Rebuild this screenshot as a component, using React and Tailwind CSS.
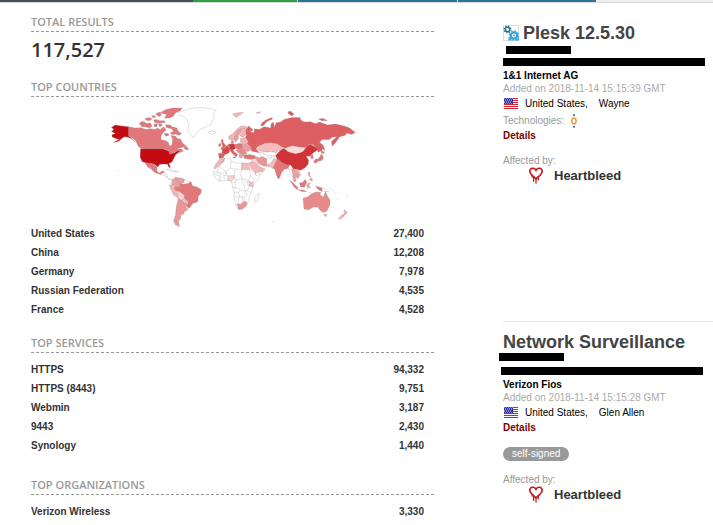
import clsx from 'clsx';

const countries = [
  { name: 'United States', count: '27,400' },
  { name: 'China', count: '12,208' },
  { name: 'Germany', count: '7,978' },
  { name: 'Russian Federation', count: '4,535' },
  { name: 'France', count: '4,528' },
];

const services = [
  { name: 'HTTPS', count: '94,332' },
  { name: 'HTTPS (8443)', count: '9,751' },
  { name: 'Webmin', count: '3,187' },
  { name: '9443', count: '2,430' },
  { name: 'Synology', count: '1,440' },
];

const organizations = [{ name: 'Verizon Wireless', count: '3,330' }];

const hosts = [
  {
    title: 'Plesk 12.5.30',
    icon: true,
    org: '1&1 Internet AG',
    added: 'Added on 2018-11-14 15:15:39 GMT',
    city: 'Wayne',
    technologies: true,
  },
  {
    title: 'Network Surveillance',
    org: 'Verizon Fios',
    added: 'Added on 2018-11-14 15:15:28 GMT',
    city: 'Glen Allen',
    tag: 'self-signed',
  },
];

// Western hemisphere: [fill, points]
const west = [
  ['#c50b12', '34,82 46,75 60,77 86,80 86,108 94,114 104,126 94,116 84,111 74,110 66,114 56,123 40,128 58,117 48,116 36,110 36,104 46,100 34,94 42,88'],
  ['#e27779', '86,80 104,84 122,83 138,88 150,86 164,88 172,84 180,88 190,80 198,90 188,98 182,108 182,118 196,122 204,126 207,136 213,138 216,128 217,116 212,106 226,108 232,116 240,116 246,128 258,138 246,141 234,144 230,148 240,146 250,152 238,158 232,151 222,156 208,162 206,152 198,148 186,145 124,145 114,138 108,124 98,114 86,108'],
  ['#e27779', '180,38 196,29 216,24 246,24 240,32 226,38 220,48 208,54 192,54 200,44'],
  ['#e27779', '196,74 210,75 216,80 230,84 234,94 244,100 236,106 226,102 216,104 210,98 220,94 214,86 198,82'],
  ['#e27779', '122,70 132,66 140,70 150,68 156,78 148,84 134,80 124,80'],
  ['#e27779', '118,68 126,64 134,66 128,72 119,74'],
  ['#e27779', '134,56 146,52 156,56 150,61 140,61'],
  ['#e27779', '160,60 168,58 178,62 192,62 196,67 180,69 164,67'],
  ['#e27779', '166,42 178,36 184,44 176,50'],
  ['#e27779', '154,48 164,46 166,52 158,52'],
  ['#e27779', '162,72 172,70 170,80 162,80'],
  ['#e27779', '176,70 186,72 182,80 176,78'],
  ['#e27779', '192,100 204,100 206,106 196,108'],
  ['#e27779', '250,142 258,138 266,148 256,149'],
  ['#c50b12', '121,146 186,146 196,149 206,153 208,162 222,158 234,151 237,155 226,164 222,172 218,180 214,186 206,190 211,202 206,201 202,192 190,191 178,193 173,200 164,193 154,190 138,188 126,184 120,172'],
  ['#e27779', '134,187 154,190 164,194 170,200 170,212 178,219 184,213 192,212 188,221 180,223 164,217 154,208 144,193 150,206 144,202'],
  ['#fff', '180,223 190,217 196,220 201,228 206,236 218,236 213,240 203,237 196,227'],
  ['#fff', '198,208 208,206 222,212 217,214 204,210'],
  ['#fff', '224,212 236,213 232,217 224,216'],
  ['#ed9ea0', '215,240 226,231 230,242 240,247 238,262 226,256 214,252'],
  ['#ed9ea0', '226,231 240,233 253,237 250,247 240,249 230,242'],
  ['#fff', '252,239 270,246 268,251 256,251 250,246'],
  ['#f3b4b4', '207,254 218,253 226,258 222,266 230,272 233,292 220,284 212,268'],
  ['#fad2d2', '232,277 240,275 252,286 252,296 240,302 234,294'],
  ['#e27779', '226,258 238,262 240,249 250,252 262,250 272,244 276,256 290,260 303,268 302,278 294,288 292,304 278,309 266,324 258,317 264,306 252,294 252,284 240,275 230,272 222,266'],
  ['#f6bcbc', '252,296 262,304 260,310 250,308 244,300'],
  ['#ea9697', '234,294 244,300 252,308 260,311 257,322 264,327 252,333 251,340 242,344 240,356 234,364 238,378 226,374 220,362 226,344 228,318 232,304'],
  ['#fff', '232,38 252,32 270,25 300,22 330,26 348,31 338,40 342,50 336,62 332,74 318,80 304,86 292,94 284,106 280,112 270,104 262,88 266,76 258,56 248,48 236,46'],
  ['#fff', '324,96 332,93 344,94 346,99 334,103 326,100'],
];

// Europe, Asia, Africa and Oceania
const east = [
  ['#fff', '-4,178 10,174 30,174 32,183 48,189 62,188 82,190 90,208 101,222 118,222 114,236 100,250 96,262 94,276 88,286 84,300 78,314 66,326 52,327 46,310 40,292 42,276 36,260 34,246 26,240 12,240 -2,243 -14,236 -22,218 -18,202 -12,188'],
  ['#fff', '108,284 116,278 115,288 109,305 102,304 103,292'],
  ['#f3b4b4', '-2,178 12,175 10,184 -4,196 -16,206 -18,200 -10,188'],
  ['#f6bcbc', '64,189 82,190 88,208 64,208'],
  ['#fad2d2', '22,227 42,226 40,236 32,243 22,240'],
  ['#f6bcbc', '86,244 98,246 96,261 85,256'],
  ['#ea9697', '50,310 60,312 70,303 78,305 79,314 66,326 54,327'],
  ['#dd5f61', '78,86 84,78 98,90 88,95 100,98 102,86 116,88 130,80 150,84 152,70 158,66 162,82 166,68 180,66 190,58 214,52 238,52 240,60 250,66 270,65 284,71 296,66 320,75 344,72 370,78 386,84 403,97 392,103 378,99 372,106 356,110 344,128 334,138 332,124 348,110 334,111 324,119 304,118 296,126 308,136 304,151 292,156 290,148 278,134 266,132 256,142 236,141 216,137 196,144 186,141 168,131 150,128 132,130 112,138 106,146 116,158 94,153 88,138 76,128 74,112 78,106 74,94'],
  ['#dd5f61', '120,77 124,68 136,60 152,53 157,56 138,65 128,77'],
  ['#dd5f61', '202,35 210,34 220,42 214,48 204,42'],
  ['#dd5f61', '293,57 306,55 320,61 304,62'],
  ['#dd5f61', '304,134 310,142 312,152 306,146'],
  ['#f3b4b4', '36,42 50,38 68,37 60,43 48,52 42,48'],
  ['#f3b4b4', '108,37 120,35 118,39 108,40'],
  ['#f6bcbc', '112,139 132,130 150,128 168,131 186,142 184,150 174,151 168,157 150,154 140,156 128,154 114,151 108,145'],
  ['#fff', '128,154 140,156 150,154 166,158 162,166 150,166 140,168 128,160'],
  ['#fff', '118,156 128,160 142,168 150,166 154,172 140,180 126,170 120,168'],
  ['#fff', '136,176 154,172 166,168 158,180 146,194 138,192'],
  ['#d23337', '165,166 178,152 190,144 202,155 224,160 246,155 256,142 268,132 280,138 292,148 278,158 266,168 256,168 264,180 262,192 254,202 240,210 230,208 218,206 210,194 198,194 180,186 170,178'],
  ['#fcd9d9', '192,145 204,140 216,137 236,141 252,143 250,151 238,158 224,161 204,155'],
  ['#e27779', '158,194 166,178 176,178 184,188 198,195 208,193 202,204 190,208 182,218 178,232 172,236 166,220 162,206 156,204'],
  ['#f6bcbc', '142,194 154,186 158,176 170,176 164,188 158,202 144,200'],
  ['#ea9697', '104,168 114,173 128,170 138,176 138,190 142,198 130,198 118,192 110,184'],
  ['#f3b4b4', '84,188 96,184 112,194 122,202 134,206 128,214 104,218 92,204'],
  ['#fff', '104,218 126,213 120,222 106,226'],
  ['#fad2d2', '90,176 104,174 116,192 96,185'],
  ['#e27779', '68,165 86,163 102,166 106,174 90,177 72,175'],
  ['#dd5f61', '-6,159 10,160 14,163 8,173 -4,175'],
  ['#d9484b', '0,145 12,144 20,136 28,146 26,158 14,163 4,158 6,150'],
  ['#d23337', '26,134 34,130 43,133 44,146 36,150 27,147'],
  ['#d9484b', '20,136 28,130 27,140'],
  ['#dd5f61', '2,118 8,119 8,126 16,136 15,141 2,145 7,137 4,130'],
  ['#e27779', '-5,131 2,130 1,138 -5,140'],
  ['#dd5f61', '28,150 38,149 40,154 52,164 46,170 34,158'],
  ['#dd5f61', '36,171 45,170 44,174'],
  ['#f3b4b4', '24,109 36,102 48,88 62,78 78,79 76,86 60,88 50,94 44,108 40,118 27,119'],
  ['#ed9ea0', '50,94 60,88 62,97 54,106 54,114 46,126 40,118 44,108'],
  ['#f3b4b4', '60,88 74,84 77,104 66,111 58,107 64,98'],
  ['#e27779', '32,122 38,121 40,129 33,129'],
  ['#e27779', '43,133 58,129 66,132 66,144 54,148 44,144'],
  ['#f3b4b4', '60,115 76,112 84,126 74,137 66,132 60,126'],
  ['#ed9ea0', '66,137 76,132 90,138 94,148 82,154 72,152 64,146'],
  ['#e68a8a', '54,148 64,146 76,153 78,162 64,164 54,158 46,150'],
  ['#ed9ea0', '56,162 68,164 64,174 56,171'],
  ['#e27779', '268,166 276,163 278,174 272,176'],
  ['#e27779', '278,184 284,177 294,175 302,161 308,172 304,180 292,183 284,190'],
  ['#e27779', '302,152 312,156 306,161 301,158'],
  ['#ed9ea0', '212,207 220,206 228,214 236,222 232,234 224,230 226,242 220,246 216,230'],
  ['#fff', '202,205 212,207 218,228 210,222'],
  ['#f6bcbc', '226,208 234,210 240,224 232,234 234,222'],
  ['#e27779', '208,240 218,248 232,262 230,268 220,260'],
  ['#e27779', '232,268 246,269 258,273 246,274'],
  ['#e27779', '236,249 246,246 254,238 258,246 252,260 240,260'],
  ['#ed9ea0', '260,250 270,248 264,254 270,264 264,260 260,266'],
  ['#ed9ea0', '262,216 268,217 266,226 272,232 264,228'],
  ['#ed9ea0', '266,236 274,234 275,242 268,240'],
  ['#e27779', '284,257 294,260 304,263 304,273 294,269'],
  ['#fff', '304,263 314,267 324,275 314,273 304,273'],
  ['#e68a8a', '247,294 262,289 272,280 286,275 300,276 298,284 308,290 314,273 320,288 328,300 327,314 318,332 308,336 298,330 292,320 278,320 264,328 250,326'],
  ['#e68a8a', '309,342 318,342 314,349'],
  ['#f3b4b4', '370,328 380,336 374,343 366,346 370,338'],
  ['#f3b4b4', '364,342 370,347 358,357 353,354'],
];

const africaBorders = [
  'M12 175L10 184L-4 198L16 214L30 204L32 183M30 204L40 206L64 208V188M-6 198L-8 216L-20 216M-8 216L2 220L16 214M2 220L0 240M10 222L12 240M22 227L18 218M42 226L44 208',
  'M64 208L60 224L66 236L84 240L90 226L88 208M90 226L102 238L98 246M42 226L44 240L60 236L66 236M34 246L46 246L50 238M46 246L44 262L36 260M66 236L64 246L72 256L74 272L60 270L54 262L40 264M40 276L54 276L60 270M84 240L80 250L86 258L80 272L74 272',
  'M54 276L58 290H42M58 290L70 290L72 302M74 272L80 284L70 290M80 272L92 276M-14 224L-4 226L-2 243M-20 222L-12 222M70 246L84 244M66 290V304M54 292V310M16 214L18 226L10 226',
];

function WorldMap() {
  return (
    <svg
      viewBox="6 0 783 381"
      role="img"
      aria-label="World map"
      className="mx-auto mt-[3px] block w-[65%]"
      stroke="#8f8585"
      strokeOpacity="0.6"
      strokeWidth="1.3"
      strokeLinejoin="round"
    >
      {west.map(([fill, points]) => (
        <polygon key={points} fill={fill} points={points} />
      ))}
      <path d="M54 211l3 2M228 214v3M250 370l4 1M240 216l3 1M192 218l-2 5M202 228l-4 2" fill="none" />
      <g transform="translate(360 0)">
        {east.map(([fill, points]) => (
          <polygon key={points} fill={fill} points={points} />
        ))}
        {africaBorders.map((d) => (
          <path key={d} d={d} fill="none" />
        ))}
        <path
          d="M262 277l8 -1M326 264l6 3M334 270l6 3M342 276l4 3M350 296l5 4M376 290l5 -1M154 363l4 1M180 237l3 4M252 212l3 -1M262 204l2 3M278 262l3 2M380 76l6 1"
          fill="none"
        />
      </g>
    </svg>
  );
}

function PleskIcon() {
  return (
    <svg viewBox="0 0 16 16" className="h-4 w-4 shrink-0" aria-hidden="true">
      <rect x="0.5" y="0.5" width="15" height="15" fill="#fff" stroke="#d5dde0" />
      <circle cx="4.5" cy="4.5" r="2.2" fill="none" stroke="#28728f" strokeWidth="1.5" />
      <circle cx="4.5" cy="4.5" r="3.4" fill="none" stroke="#28728f" strokeWidth="1.2" strokeDasharray="1.4 1.27" />
      <circle cx="11" cy="10.5" r="3.2" fill="none" stroke="#35a5d8" strokeWidth="2.2" />
      <circle cx="11" cy="10.5" r="4.6" fill="none" stroke="#35a5d8" strokeWidth="1.3" strokeDasharray="1.8 1.8" />
      <path d="M5.5 12.5h3v3h-3zM12 15.5h4v-3z" fill="#35a5d8" />
      <circle cx="11" cy="10.5" r="1" fill="#35a5d8" />
    </svg>
  );
}

function UsFlag() {
  return (
    <svg viewBox="0 0 14 11" className="ml-px h-[11px] w-3.5 shrink-0" role="img" aria-label="US flag">
      <rect width="14" height="11" fill="#fff" />
      <path d="M0 .5h14M0 2.5h14M0 4.5h14M0 6.5h14M0 8.5h14M0 10.5h14" stroke="#d41f2c" />
      <rect width="9" height="6" fill="#2d2da4" />
      <path d="M1 1.5h8M0 3.5h8M1 5.5h8M0 .5h9M1 2.5h8M0 4.5h8" stroke="#8a8ad0" strokeDasharray="1 1" />
    </svg>
  );
}

function TechIcon() {
  return (
    <svg viewBox="0 0 6 14" className="h-3.5 w-1.5 shrink-0" role="img" aria-label="Web technology">
      <ellipse cx="3" cy="7" rx="2.1" ry="2.9" fill="none" stroke="#f7963c" strokeWidth="1.5" />
      <circle cx="3" cy="1.2" r="1.1" fill="#3d6fe0" />
      <circle cx="3" cy="12.8" r="1.1" fill="#3d6fe0" />
    </svg>
  );
}

function BleedingHeart() {
  return (
    <svg viewBox="0 0 14 17" className="h-[17px] w-3.5 shrink-0" aria-hidden="true" fill="none" stroke="#c4161c" strokeLinecap="round">
      <path d="M7 3.3C5.8 1 2.7.6 1.4 2.4.2 4.3 1.1 6.3 2.6 7.8L7 11.8l4.4-4C12.9 6.3 13.8 4.3 12.6 2.4 11.3.6 8.2 1 7 3.3z" strokeWidth="1.6" />
      <path d="M4.6 9.5v5M7 11.5v4.7M9.3 9.8V13M3.2 8.2v2" strokeWidth="1.2" />
    </svg>
  );
}

function Section({ title, rows, className, children }) {
  return (
    <section className={className}>
      <h2 className="border-b border-dashed border-[#999] pb-0.5 font-['Open_Sans',sans-serif] text-[11px] leading-[14px] font-semibold text-[#999] uppercase">
        {title}
      </h2>
      {children}
      {rows && (
        <ul className="flex flex-col gap-[7px] pt-px pr-2.5 text-[10px] leading-3 font-bold text-[#333]">
          {rows.map((row) => (
            <li key={row.name} className="flex justify-between">
              <a href="#">{row.name}</a>
              <span>{row.count}</span>
            </li>
          ))}
        </ul>
      )}
    </section>
  );
}

function Host({ host, className }) {
  return (
    <article className={clsx('text-[10px] leading-[13px]', className)}>
      <h3 className="flex items-center gap-1 text-lg leading-5 font-bold whitespace-nowrap text-[#444]">
        {host.icon && <PleskIcon />}
        {host.title}
      </h3>

      {/* masked address and hostname */}
      <div className={clsx('h-2 w-[65px] bg-black', host.icon ? 'mt-[3px] ml-[3px]' : 'mt-px -ml-1')} />
      <div className={clsx('mb-[3px] h-2 bg-black', host.icon ? 'mt-1 mr-2' : 'mt-1.5 mr-2.5 -ml-0.5')} />

      <p className="font-bold text-black">{host.org}</p>
      <p className="text-[#aaa]">{host.added}</p>
      <p className="flex h-[17px] items-center text-black">
        <UsFlag />
        <a href="#" className="ml-[7px]">United States</a>
        <span>,</span>
        <a href="#" className="ml-[11px]">{host.city}</a>
      </p>
      {host.technologies && (
        <p className="flex h-[17px] items-center gap-[7px] text-[#999]">
          Technologies:
          <TechIcon />
        </p>
      )}
      <a href="#" className="block font-bold text-[#800000]">Details</a>

      {host.tag && (
        <div className="mt-[13px] flex">
          <span className="rounded-full bg-[#999] px-[9px] leading-[14px] text-white">{host.tag}</span>
        </div>
      )}

      <p className="mt-3 text-[#999]">Affected by:</p>
      <p className="flex h-[17px] items-center gap-[11px] pl-[26px] text-[13px] font-bold text-[#333]">
        <BleedingHeart />
        Heartbleed
      </p>
    </article>
  );
}

export default function App() {
  return (
    <div className="min-h-screen bg-white font-['Liberation_Sans',Arial,sans-serif]">
      {/* tab strip along the top edge */}
      <div className="grid h-[3px] grid-cols-[193fr_104fr_160fr_139fr_117fr] border-b border-[#d8d8d8] bg-[#eee]">
        <div className="bg-[#474f57]" />
        <div className="bg-[#2f9e41]" />
        <div className="border-l border-[#d8d8d8] bg-[#2e7199]" />
        <div className="border-l border-[#d8d8d8] bg-[#2e7199]" />
        <div />
      </div>

      <div className="grid grid-cols-[403fr_210fr] gap-[69px] pl-[31px]">
        <aside className="pt-3">
          <Section title="Total Results">
            <p className="mt-1 font-['Open_Sans',sans-serif] text-xl leading-7 font-semibold text-[#333]">117,527</p>
          </Section>
          <Section title="Top Countries" rows={countries} className="mt-4">
            <WorldMap />
          </Section>
          <Section title="Top Services" rows={services} className="mt-5">
            <div className="h-2.5" />
          </Section>
          <Section title="Top Organizations" rows={organizations} className="mt-[26px]">
            <div className="h-2.5" />
          </Section>
        </aside>

        <main className="pt-5">
          <Host host={hosts[0]} className="pb-[137px]" />
          <Host host={hosts[1]} className="border-t border-[#e5e5e5] pt-2.5" />
        </main>
      </div>
    </div>
  );
}
